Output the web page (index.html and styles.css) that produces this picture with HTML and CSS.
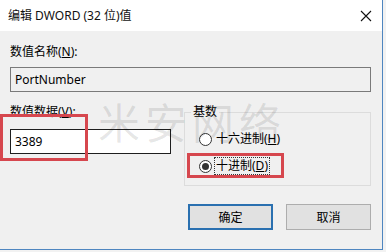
FILE: index.html
```html
<!DOCTYPE html>
<html lang="zh-CN">

<head>
    <meta charset="UTF-8">
    <title>编辑 DWORD (32 位)值</title>
    <link rel="stylesheet" href="styles.css">
</head>

<body>
    <div class="window">
        <div class="titlebar">
            <span class="title">编辑 DWORD (32 位)值</span>
            <svg class="close" width="12" height="12" viewBox="0 0 12 12">
                <path d="M1 1 L11 11 M11 1 L1 11" stroke="#111" stroke-width="1.1" fill="none" />
            </svg>
        </div>

        <div class="content">
            <div class="label">数值名称(<u>N</u>):</div>
            <div class="field field-readonly">PortNumber</div>

            <div class="row">
                <div class="col-left">
                    <div class="label">数值数据(<u>V</u>):</div>
                    <div class="field field-edit">3389</div>
                </div>
                <div class="group">
                    <div class="legend">基数</div>
                    <div class="radio-row">
                        <span class="radio"></span>
                        <span class="radio-text">十六进制(<u>H</u>)</span>
                    </div>
                    <div class="radio-row">
                        <span class="radio checked"></span>
                        <span class="radio-text focused">十进制(<u>D</u>)</span>
                    </div>
                </div>
            </div>

            <div class="buttons">
                <button class="btn btn-default">确定</button>
                <button class="btn">取消</button>
            </div>
        </div>

        <!-- annotations -->
        <div class="mark mark-value"></div>
        <div class="mark mark-radio"></div>
        <div class="watermark">米安网络</div>
    </div>
</body>

</html>
```

FILE: styles.css
```css
body {
    margin: 0;
    background-color: #f2f2f2;
    font-family: "Noto Sans", "Noto Sans CJK SC", sans-serif;
    font-size: 12px;
    color: #000;
}

.window {
    position: relative;
    width: 382px;
    height: 249px;
    background-color: #f0f0f0;
    border-right: 1px solid #4f86c0;
    border-bottom: 1px solid #4f86c0;
    overflow: hidden;
}

.titlebar {
    height: 31px;
    background-color: #fff;
    display: flex;
    align-items: center;
    justify-content: space-between;
    padding: 0 10px 0 8px;
}

.title {
    line-height: 16px;
    color: #111;
}

.content {
    padding: 0 11px 0 10px;
}

.label {
    line-height: 16px;
    margin-top: 13px;
}

u {
    text-decoration-thickness: 1px;
    text-underline-offset: 1px;
}

.field {
    height: 25px;
    box-sizing: border-box;
    padding: 0 4px;
    line-height: 23px;
    margin-top: 7px;
}

.field-readonly {
    background-color: #f0f0f0;
    border: 1px solid #7a7a7a;
}

.row {
    display: flex;
    gap: 13px;
    margin-top: 12px;
}

.col-left .label {
    margin-top: 0;
}

.field-edit {
    width: 161px;
    margin-top: 9px;
    background-color: #fff;
    border: 1px solid #1e1e1e;
}

.group {
    width: 187px;
    height: 74px;
    box-sizing: border-box;
    margin-top: 8px;
    border: 1px solid #dcdcdc;
    padding-left: 14px;
}

.legend {
    width: fit-content;
    margin: -9px 0 0 -8px;
    padding: 0 2px;
    background-color: #f0f0f0;
    line-height: 16px;
}

.radio-row {
    display: flex;
    align-items: center;
    gap: 3px;
    height: 16px;
    margin-top: 11px;
}

.radio {
    width: 13px;
    height: 13px;
    box-sizing: border-box;
    border: 1px solid #333;
    border-radius: 50%;
    background-color: #fff;
    display: flex;
    align-items: center;
    justify-content: center;
}

.radio.checked::after {
    content: "";
    width: 7px;
    height: 7px;
    border-radius: 50%;
    background-color: #333;
}

.radio-text {
    line-height: 16px;
    padding: 0 1px;
}

.radio-text.focused {
    outline: 1px dotted #333;
}

.buttons {
    display: flex;
    justify-content: flex-end;
    gap: 13px;
    margin-top: 18px;
}

.btn {
    width: 85px;
    height: 26px;
    font-family: inherit;
    font-size: 12px;
    color: #000;
    background-color: #e1e1e1;
    border: 1px solid #adadad;
    padding: 0;
}

.btn-default {
    border: 2px solid #2a70b0;
}

.mark {
    position: absolute;
    border: 3px solid #d6474e;
    box-sizing: border-box;
}

.mark-value {
    left: 0;
    top: 114px;
    width: 88px;
    height: 47px;
}

.mark-radio {
    left: 187px;
    top: 153px;
    width: 97px;
    height: 25px;
}

.watermark {
    position: absolute;
    left: 98px;
    top: 96px;
    font-family: "Noto Sans CJK SC", sans-serif;
    font-size: 42px;
    line-height: 50px;
    letter-spacing: 5px;
    color: rgba(0, 0, 0, 0.1);
    pointer-events: none;
}
```
